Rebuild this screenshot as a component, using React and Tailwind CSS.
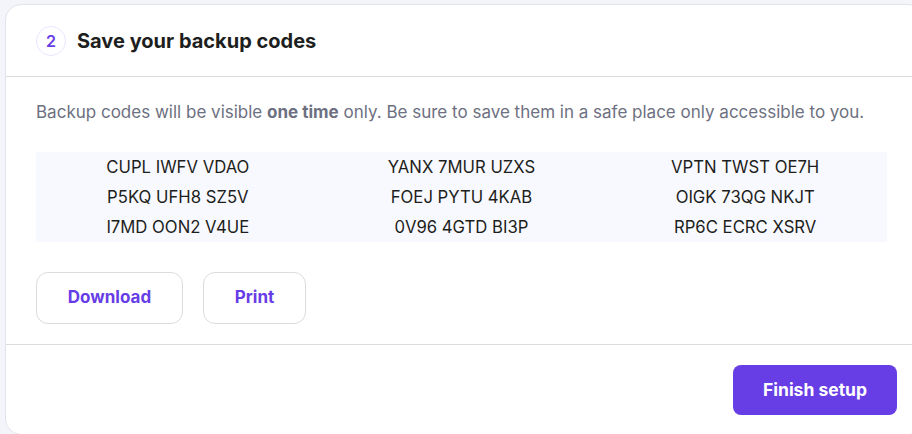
import React from 'react';

const CODES = [
  ['CUPL IWFV VDAO', 'YANX 7MUR UZXS', 'VPTN TWST OE7H'],
  ['P5KQ UFH8 SZ5V', 'FOEJ PYTU 4KAB', 'OIGK 73QG NKJT'],
  ['I7MD OON2 V4UE', '0V96 4GTD BI3P', 'RP6C ECRC XSRV'],
];

export default function App() {
  return (
    <div
      className="h-[434px] w-full overflow-hidden bg-[#f4f4fb] pl-[5px] pt-[4px]"
      style={{ fontFamily: 'Inter, "Noto Sans", sans-serif' }}
    >
      {/* Card */}
      <div className="w-[920px] rounded-2xl border border-[#e3e3ea] bg-white">
        {/* Header */}
        <div className="flex h-[72px] items-center gap-[11px] border-b border-[#dadce0] px-[30px]">
          <div className="flex h-[30px] w-[30px] items-center justify-center rounded-full border border-[#ebe4ff] text-[16px] font-semibold text-[#673de6]">
            2
          </div>
          <h2 className="text-[20px] font-bold text-[#1d1e20]">Save your backup codes</h2>
        </div>

        {/* Body */}
        <div className="border-b border-[#dadce0] px-[30px] pb-[20px] pt-[23px]">
          <p className="text-[17px] leading-6 text-[#6d7081]">
            Backup codes will be visible <span className="font-bold">one time</span> only. Be sure to save them in a safe place only accessible to you.
          </p>

          <div className="mt-[28px] grid w-[851px] grid-cols-3 bg-[#f8f9fe]">
            {CODES.map((row, i) =>
              row.map((code, j) => (
                <div key={`${i}-${j}`} className="text-center text-[16.7px] leading-[30px] text-[#1d1e20]">
                  {code}
                </div>
              ))
            )}
          </div>

          <div className="mt-[30px] flex gap-5">
            <button className="h-[52px] w-[147px] rounded-xl border border-[#dadce0] text-[17px] font-bold text-[#673de6]">
              Download
            </button>
            <button className="h-[52px] w-[103px] rounded-xl border border-[#dadce0] text-[17px] font-bold text-[#673de6]">
              Print
            </button>
          </div>
        </div>

        {/* Footer */}
        <div className="flex pb-[19px] pl-[727px] pt-[20px]">
          <button className="h-[50px] w-[164px] rounded-lg bg-[#673de6] text-[17.5px] font-bold text-white">
            Finish setup
          </button>
        </div>
      </div>
    </div>
  );
}
